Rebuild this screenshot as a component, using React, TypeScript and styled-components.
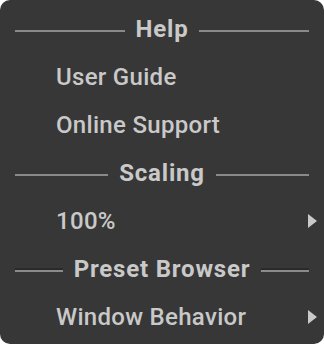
import React from "react";
import styled, { createGlobalStyle } from "styled-components";

const Global = createGlobalStyle`
  html, body { margin: 0; padding: 0; background: #ffffff; }
  body { font-family: Roboto, "Liberation Sans", sans-serif; }
`;

const Panel = styled.div`
  box-sizing: border-box;
  width: 324px;
  height: 344px;
  background: #373737;
  border-radius: 10px;
  padding: 5px 15px 3px 15px;
  display: flex;
  flex-direction: column;
`;

const Header = styled.div`
  height: 48px;
  display: flex;
  align-items: center;
  gap: 11px;
`;

const Line = styled.div<{ $etched?: boolean }>`
  flex: 1;
  height: 2px;
  margin-top: 4px;
  background: #8a8a8a;
  box-shadow: ${(p) => (p.$etched ? "0 -2px 0 #2a2a2a" : "none")};
`;

const HeaderText = styled.span`
  font-size: 24px;
  font-weight: 700;
  color: #c9c9c9;
  letter-spacing: 0.8px;
  line-height: 48px;
`;

const Item = styled.div`
  height: 48px;
  display: flex;
  align-items: center;
  justify-content: space-between;
  padding-left: 41px;
  font-size: 24px;
  font-weight: 500;
  color: #c9c9c9;
  letter-spacing: 0.3px;
  line-height: 48px;
`;

const Arrow = styled.span`
  width: 0;
  height: 0;
  margin-top: -1px;
  margin-right: -8px;
  border-top: 7px solid transparent;
  border-bottom: 7px solid transparent;
  border-left: 9px solid #c9c9c9;
`;

const Section = ({ title, etched }: { title: string; etched?: boolean }) => (
  <Header>
    <Line $etched={etched} />
    <HeaderText>{title}</HeaderText>
    <Line $etched={etched} />
  </Header>
);

export default function App() {
  return (
    <>
      <Global />
      <Panel>
        <Section title="Help" />
        <Item>User Guide</Item>
        <Item>Online Support</Item>
        <Section title="Scaling" />
        <Item>
          100%
          <Arrow />
        </Item>
        <Section title="Preset Browser" etched />
        <Item>
          Window Behavior
          <Arrow />
        </Item>
      </Panel>
    </>
  );
}
